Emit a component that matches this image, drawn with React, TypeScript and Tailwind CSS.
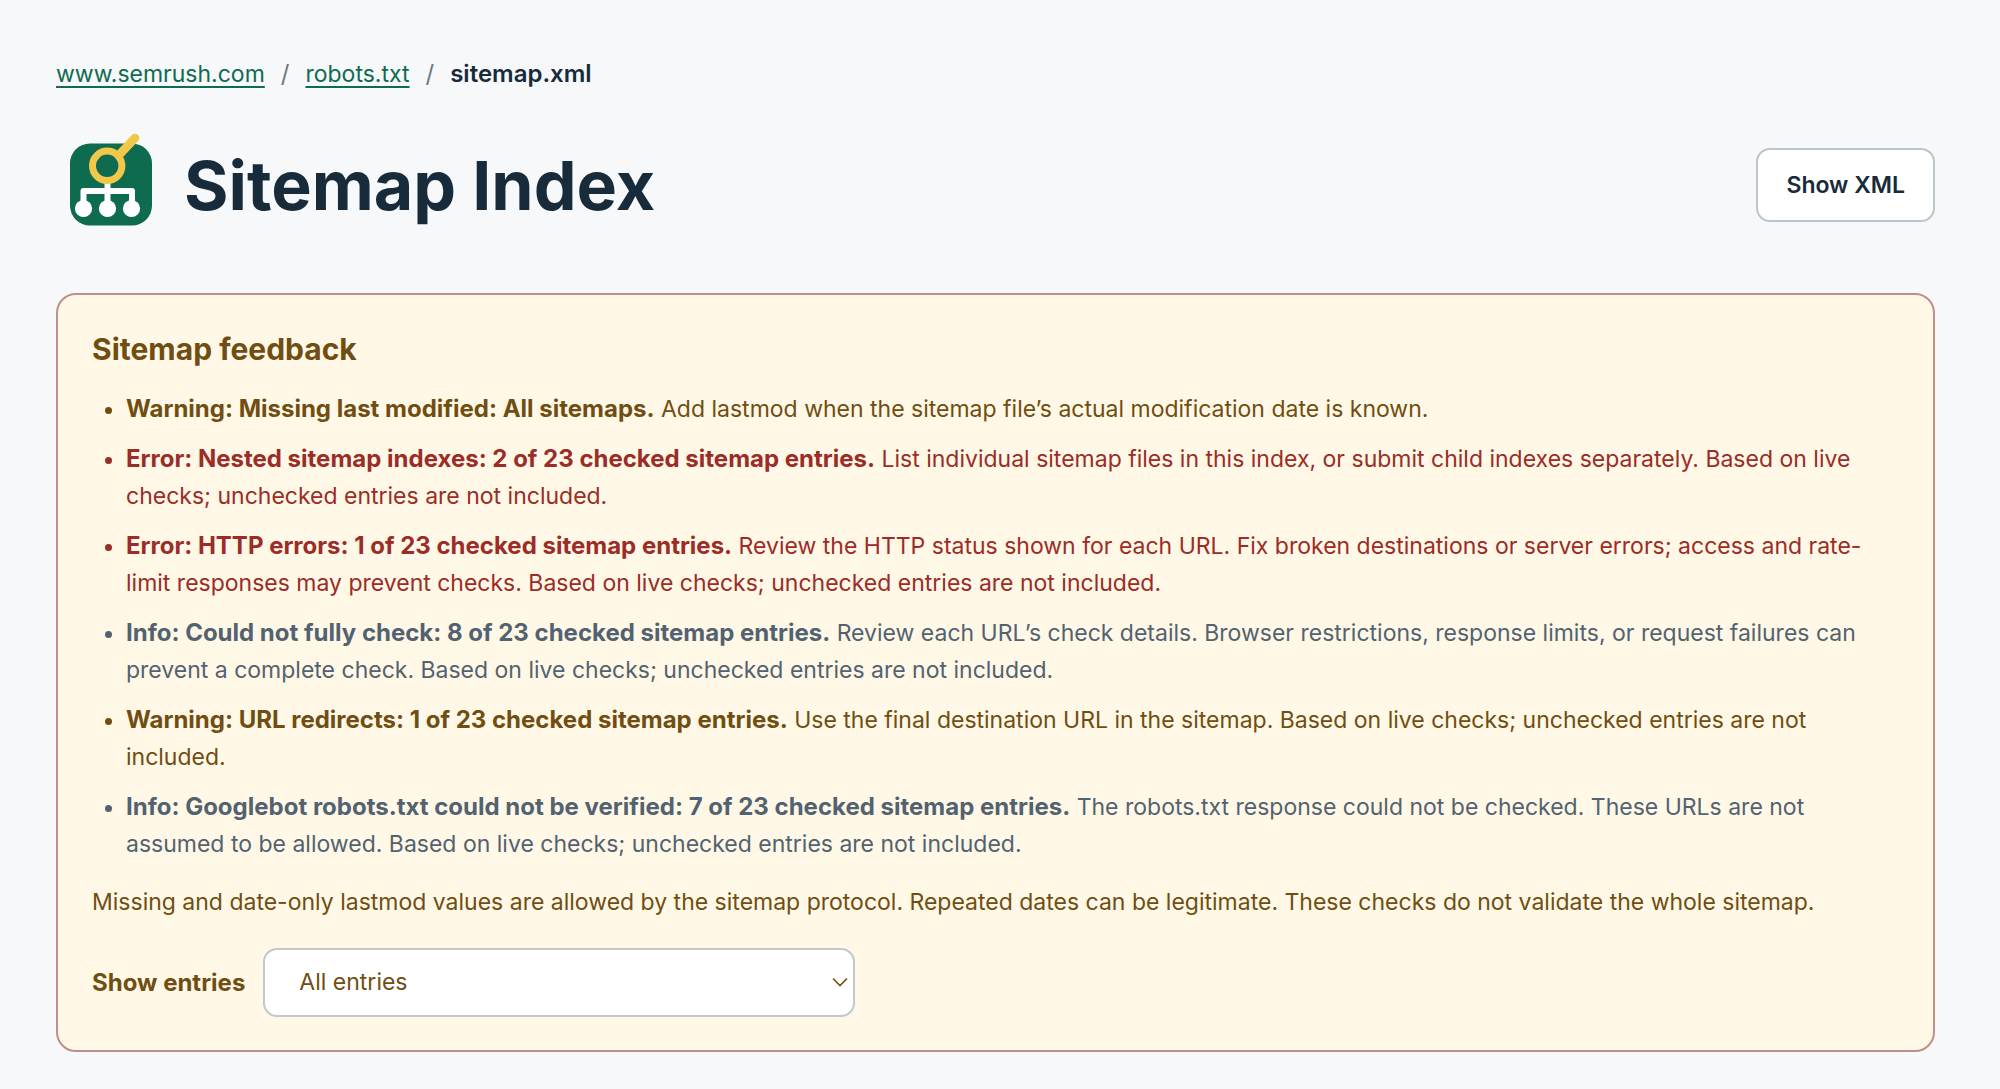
import React, { useState } from 'react';
import { clsx } from 'clsx';

type Level = 'Warning' | 'Error' | 'Info';

interface Feedback {
  level: Level;
  title: string;
  detail: string;
}

const FEEDBACK: Feedback[] = [
  {
    level: 'Warning',
    title: 'Missing last modified: All sitemaps.',
    detail: 'Add lastmod when the sitemap file’s actual modification date is known.',
  },
  {
    level: 'Error',
    title: 'Nested sitemap indexes: 2 of 23 checked sitemap entries.',
    detail:
      'List individual sitemap files in this index, or submit child indexes separately. Based on live checks; unchecked entries are not included.',
  },
  {
    level: 'Error',
    title: 'HTTP errors: 1 of 23 checked sitemap entries.',
    detail:
      'Review the HTTP status shown for each URL. Fix broken destinations or server errors; access and rate-limit responses may prevent checks. Based on live checks; unchecked entries are not included.',
  },
  {
    level: 'Info',
    title: 'Could not fully check: 8 of 23 checked sitemap entries.',
    detail:
      'Review each URL’s check details. Browser restrictions, response limits, or request failures can prevent a complete check. Based on live checks; unchecked entries are not included.',
  },
  {
    level: 'Warning',
    title: 'URL redirects: 1 of 23 checked sitemap entries.',
    detail:
      'Use the final destination URL in the sitemap. Based on live checks; unchecked entries are not included.',
  },
  {
    level: 'Info',
    title: 'Googlebot robots.txt could not be verified: 7 of 23 checked sitemap entries.',
    detail:
      'The robots.txt response could not be checked. These URLs are not assumed to be allowed. Based on live checks; unchecked entries are not included.',
  },
];

const Logo: React.FC = () => (
  <svg viewBox="0 0 100 110" className="h-[110px] w-[100px] shrink-0" aria-hidden="true">
    <rect x="10" y="18.5" width="82" height="82" rx="20" fill="#0f6b50" />
    {/* tree */}
    <g fill="none" stroke="#fff" strokeWidth="6" strokeLinejoin="round">
      <path d="M47.5 57V83" />
      <path d="M23.5 83V66H72V83" />
    </g>
    <g fill="#fff">
      <circle cx="23.5" cy="83.5" r="8.6" />
      <circle cx="47.5" cy="83.5" r="8.6" />
      <circle cx="71.5" cy="83.5" r="8.6" />
    </g>
    {/* magnifier */}
    <path d="M59.5 29.5L75 13" stroke="#f2c84b" strokeWidth="8.6" strokeLinecap="round" />
    <circle cx="47.2" cy="40.8" r="14.7" fill="none" stroke="#f2c84b" strokeWidth="7" />
  </svg>
);

const FeedbackItem: React.FC<{ item: Feedback }> = ({ item }) => (
  <li
    className={clsx(
      item.level === 'Warning' && 'text-[#704e12]',
      item.level === 'Error' && 'text-[#9b2c27]',
      item.level === 'Info' && 'text-[#536270]'
    )}
  >
    <strong className="text-2xl leading-none font-bold">
      {item.level}: {item.title}
    </strong>{' '}
    {item.detail}
  </li>
);

export default function App() {
  const [filter, setFilter] = useState('all');

  return (
    <div className="min-h-screen bg-[#f6f8fa] pt-14 pr-[65px] pb-9 pl-14 font-['Inter',sans-serif] text-[23px] text-[#182b3a]">
      <nav aria-label="Breadcrumb" className="flex items-center gap-4 leading-9">
        <a href="#site" className="text-[#0f6b50] underline decoration-2 underline-offset-4">
          www.semrush.com
        </a>
        <span className="text-2xl leading-9 text-[#6f777e]">/</span>
        <a href="#robots" className="text-[#0f6b50] underline decoration-2 underline-offset-4">
          robots.txt
        </a>
        <span className="text-2xl leading-9 text-[#6f777e]">/</span>
        <span className="text-2xl leading-9 font-semibold">sitemap.xml</span>
      </nav>

      <header className="mt-[33px] flex items-center justify-between">
        <div className="flex items-start gap-6 pl-1">
          <Logo />
          <h1 className="text-[68px] leading-[120px] font-bold">Sitemap Index</h1>
        </div>
        <button
          type="button"
          className="h-[74px] rounded-[14px] border-2 border-[#bcc5cc] bg-white px-7 font-semibold"
        >
          Show XML
        </button>
      </header>

      <section className="mt-12 rounded-[20px] border-2 border-[#c08f88] bg-[#fff8e6] px-[34px] py-[33px] text-[#704e12]">
        <h2 className="text-[30px] leading-[42px] font-bold">Sitemap feedback</h2>

        <ul className="mt-[21px] flex list-disc flex-col gap-[13px] pl-[34px] leading-[37px]">
          {FEEDBACK.map((item) => (
            <FeedbackItem key={item.title} item={item} />
          ))}
        </ul>

        <p className="mt-[21px] leading-[37px]">
          Missing and date-only lastmod values are allowed by the sitemap protocol. Repeated dates can be
          legitimate. These checks do not validate the whole sitemap.
        </p>

        <div className="mt-[27px] flex items-center gap-[18px]">
          <label htmlFor="entries" className="text-2xl font-bold">
            Show entries
          </label>
          <div className="relative w-[592px]">
            <select
              id="entries"
              value={filter}
              onChange={(e) => setFilter(e.target.value)}
              className="block h-[69px] w-full appearance-none rounded-[14px] border-2 border-[#c3c8cc] bg-white px-[34px]"
            >
              <option value="all">All entries</option>
            </select>
            <svg
              viewBox="0 0 16 10"
              className="pointer-events-none absolute top-[29px] right-[7px] h-[10px] w-4"
              aria-hidden="true"
            >
              <path d="M1 1.5L8 8.5L15 1.5" fill="none" stroke="#704e12" strokeWidth="1.6" />
            </svg>
          </div>
        </div>
      </section>
    </div>
  );
}
